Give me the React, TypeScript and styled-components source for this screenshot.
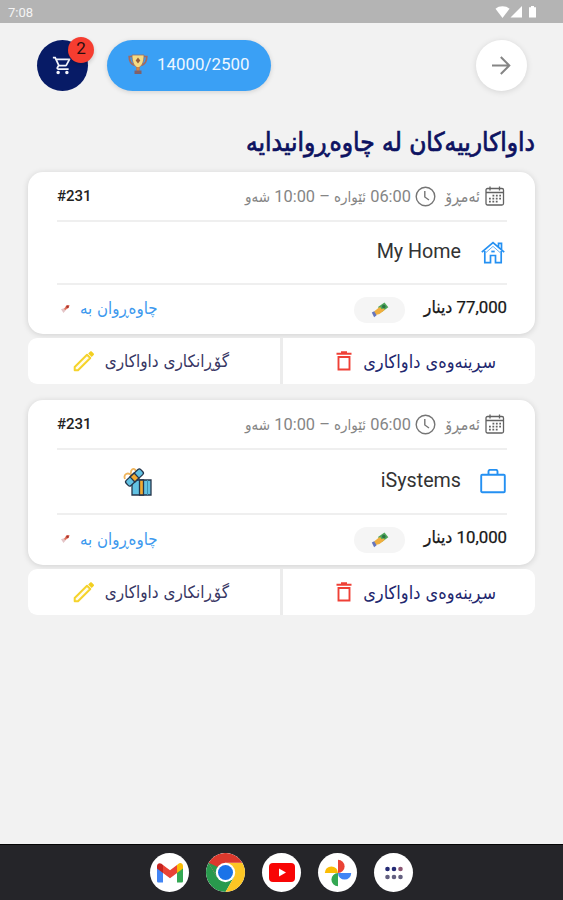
import React from "react";
import styled, { createGlobalStyle } from "styled-components";

const Global = createGlobalStyle`
  * { box-sizing: border-box; }
  body { margin: 0; background: #f2f2f2; font-family: Roboto, "DejaVu Sans", sans-serif; }
  svg { display: block; flex: none; }
`;

const Screen = styled.div`
  width: 563px;
  height: 900px;
  overflow: hidden;
  display: flex;
  flex-direction: column;
  background: #f2f2f2;
`;

const StatusBar = styled.div`
  height: 23px;
  flex: none;
  display: flex;
  align-items: center;
  justify-content: space-between;
  padding: 1px 25px 0 8px;
  background: #b4b4b4;
  color: #f4f4f4;
  font-size: 13px;
`;

const TopBar = styled.header`
  display: flex;
  align-items: center;
  height: 51px;
  margin: 17px 36px 0 37px;
`;

const CartButton = styled.div`
  position: relative;
  width: 51px;
  height: 51px;
  border-radius: 50%;
  background: #071b66;
  display: flex;
  align-items: center;
  justify-content: center;
`;

const Badge = styled.span`
  position: absolute;
  top: -3px;
  right: -6px;
  width: 26px;
  height: 26px;
  border-radius: 50%;
  background: #f63d30;
  color: #2a0d10;
  font-size: 17px;
  line-height: 22px;
  text-align: center;
  box-shadow: 0 2px 4px rgba(0, 0, 0, 0.18);
`;

const Points = styled.div`
  display: flex;
  align-items: center;
  gap: 9px;
  width: 164px;
  height: 51px;
  margin-left: 19px;
  padding: 0 0 4px 21px;
  border-radius: 26px;
  background: #3aa0f5;
  box-shadow: 0 1px 5px rgba(0, 0, 0, 0.14);
  color: #eef7ff;
  font-size: 16.9px;
`;

const NextButton = styled.div`
  width: 51px;
  height: 51px;
  margin-left: auto;
  border-radius: 50%;
  background: #fff;
  display: flex;
  align-items: center;
  justify-content: center;
  box-shadow: 0 1px 6px rgba(0, 0, 0, 0.12);
`;

const Title = styled.h1`
  direction: rtl;
  height: 36px;
  margin: 34px 28px 11px;
  color: #0d1261;
  font-family: "DejaVu Sans Condensed", "DejaVu Sans", sans-serif;
  font-stretch: condensed;
  font-size: 26px;
  font-weight: 400;
  -webkit-text-stroke: 0.7px #0d1261;
  line-height: 34px;
  white-space: nowrap;
`;

const Order = styled.section`
  direction: rtl;
  width: 507px;
  margin: 0 28px 16px;
`;

const Card = styled.div`
  padding: 0 28px 0 29px;
  border-radius: 15px;
  background: #fff;
  box-shadow: 0 1px 6px rgba(0, 0, 0, 0.14);
`;

const Row = styled.div<{ $h: number; $line?: boolean; $lift?: number }>`
  display: flex;
  align-items: center;
  height: ${(p) => p.$h}px;
  padding-bottom: ${(p) => p.$lift ?? 0}px;
  border-bottom: ${(p) => (p.$line ? "2px solid #efefef" : "0")};
  white-space: nowrap;
`;

const IconSlot = styled.span<{ $w: number; $gap?: number }>`
  width: ${(p) => p.$w}px;
  margin-inline-end: ${(p) => p.$gap ?? 0}px;
  display: flex;
  flex: none;
  justify-content: center;
`;

const Kurdish = styled.span<{ $size: number; $color?: string }>`
  font-family: "DejaVu Sans Condensed", "DejaVu Sans", sans-serif;
  font-stretch: condensed;
  font-size: ${(p) => p.$size}px;
  color: ${(p) => p.$color ?? "inherit"};
`;

const When = styled.span<{ $w: number }>`
  width: ${(p) => p.$w}px;
  flex: none;
  color: #858585;
  font-size: 16.4px;
`;

const OrderId = styled.span`
  margin-right: auto;
  direction: ltr;
  color: #222;
  font-size: 15px;
  font-weight: 500;
`;

const Place = styled.span`
  direction: ltr;
  margin-bottom: 3px;
  color: #333;
  font-size: 19.7px;
`;

const GiftSlot = styled.span`
  margin-inline-start: auto;
  margin-inline-end: 66px;
`;

const Price = styled.span`
  width: 102px;
  flex: none;
  margin-bottom: 3px;
  color: #161616;
  font-size: 16.8px;
  -webkit-text-stroke: 0.25px #161616;
`;

const MoneyPill = styled.span`
  width: 51px;
  height: 26px;
  display: flex;
  align-items: center;
  justify-content: center;
  margin-top: 3px;
  border-radius: 13px;
  background: #f5f5f5;
`;

const Waiting = styled.span`
  display: flex;
  align-items: center;
  gap: 9px;
  margin-inline-start: auto;
  margin-inline-end: 3px;
`;

const Actions = styled.div`
  display: grid;
  grid-template-columns: 252px 252px;
  gap: 3px;
  height: 46px;
  margin-top: 4px;
  border-radius: 9px;
  background: #ececec;
  overflow: hidden;
`;

const Action = styled.div<{ $start: number; $gap: number }>`
  display: flex;
  align-items: center;
  gap: ${(p) => p.$gap}px;
  padding-inline-start: ${(p) => p.$start}px;
  background: #fff;
  white-space: nowrap;
`;

const Dock = styled.nav`
  height: 56px;
  flex: none;
  margin-top: auto;
  display: flex;
  align-items: center;
  justify-content: center;
  gap: 17px;
  border-top: 1px solid #050505;
  background: #252529;
`;

const AppIcon = styled.span`
  width: 39px;
  height: 39px;
  border-radius: 50%;
  background: #fff;
  display: flex;
  align-items: center;
  justify-content: center;
  overflow: hidden;
`;

const StatusIcons = () => (
  <svg width="43" height="14" viewBox="0 0 43 14" fill="#fff">
    <path d="M.5 3.700C4 .4 11 .4 14.500 3.700L7.500 13Z" />
    <path d="M27 1V12.500H15.500Z" />
    <path d="M36 1h3v1.200h2V12.500h-7V2.200h2Z" />
  </svg>
);

const CartIcon = () => (
  <svg width="21" height="21" viewBox="0 0 24 24" fill="#f3f5fc">
    <path d="M15.550 13c.75 0 1.410-.41 1.750-1.030l3.580-6.490A1 1 0 0 0 20.010 4H5.210L4.270 2H1v2h2l3.600 7.590-1.350 2.440C4.520 15.370 5.480 17 7 17h12v-2H7l1.100-2h7.450zM6.160 6h12.150l-2.760 5H8.530L6.160 6zM7 18a2 2 0 1 0 0 4 2 2 0 0 0 0-4zm10 0a2 2 0 1 0 0 4 2 2 0 0 0 0-4z" />
  </svg>
);

const TrophyIcon = () => (
  <svg width="20" height="20" viewBox="0 0 20 20">
    <path d="M4 2.500H1.200c0 4 1.500 7.500 5.500 9M16 2.500h2.800c0 4-1.500 7.500-5.500 9" fill="none" stroke="#a4695f" strokeWidth="1.700" />
    <path d="M4 1h12c0 6-1.500 10.500-4.500 12v3h-3v-3C5.500 11.500 4 7 4 1Z" fill="#f6dc84" stroke="#94706a" strokeWidth=".8" />
    <path d="M8.700 13h2.600v4H8.700Z" fill="#d08445" />
    <path d="M6.500 16.500h7V20h-7Z" fill="#80616a" />
    <path d="m10 3.500 2.300 3-2.300 3-2.300-3Z" fill="#955d3a" />
  </svg>
);

const ArrowIcon = () => (
  <svg width="22" height="22" viewBox="0 0 22 22" fill="none" stroke="#858585" strokeWidth="2">
    <path d="M1 10.500h17M9.800 2 18.300 10.500l-8.500 8.500" />
  </svg>
);

const CalendarIcon = () => (
  <svg width="20" height="20" viewBox="0 0 20 20" fill="none" stroke="#626262">
    <rect x="1" y="2.500" width="17.500" height="16.500" rx="1.500" strokeWidth="1.300" />
    <path d="M1 6.500h17.500M5 .5v4M14.500.5v4" strokeWidth="1.300" />
    <path d="M7.500 9.700h8.500M4 12.700h12M4 15.700h9" strokeWidth="1.700" strokeDasharray="1.800 1.600" />
  </svg>
);

const ClockIcon = () => (
  <svg width="21" height="21" viewBox="0 0 21 21" fill="none" stroke="#757575" strokeWidth="1.400">
    <circle cx="10.500" cy="10.500" r="9.300" />
    <path d="M9.800 5v6l4.200 3" />
  </svg>
);

const HomeIcon = () => (
  <svg width="24" height="23" viewBox="0 0 24 23" fill="none" stroke="#2490f2" strokeWidth="1.700">
    <path d="M.8 11.200 12 1.600l11.200 9.600M17.500 5.700V2.300h3v6.500" />
    <path d="M3.800 10v11.700h5.700v-7.200h5V21.700h5.700V10" />
    <path d="M5 11.500 12 5.400l7 6.100" strokeWidth="1" opacity=".7" />
    <path d="M10.300 10.500h3.400" strokeWidth="1.800" />
  </svg>
);

const BriefcaseIcon = () => (
  <svg width="26" height="26" viewBox="0 0 26 26" fill="none" stroke="#2490f2" strokeWidth="1.900" strokeLinejoin="round">
    <rect x="1.200" y="5.700" width="23.600" height="17.500" rx="1" />
    <path d="M8.500 5.500V2.500c0-1 .6-1.600 1.600-1.600h5.800c1 0 1.600.6 1.600 1.600v3" />
  </svg>
);

const MoneyIcon = () => (
  <svg width="18" height="16" viewBox="0 0 18 16">
    <path d="m7 5 6.500-4.500 3.800 4.700-6.800 5Z" fill="#4fa65a" />
    <circle cx="12.800" cy="4.600" r="1.800" fill="#2b7445" />
    <path d="m3 9.500 5-4c1.500-1 3 .5 2 1.700l2.500-.7c1.300 0 1.500 1.200.6 2L8.500 12l-3.800 1Z" fill="#efae3d" />
    <path d="m.8 10.500 2.400-1.300 2.400 4-2.500 2Z" fill="#6575bd" />
  </svg>
);

const PinIcon = () => (
  <svg width="11" height="11" viewBox="0 0 11 11">
    <path d="M1 6.200 4.500 5l1.500 2-2.500 3Z" fill="#e4c4c6" />
    <path d="m4 6 2.500-3.700L9.500 2 8.800 4.800 5.300 7Z" fill="#e4725b" />
    <circle cx="7.500" cy="3.700" r="1.200" fill="#a6352f" />
  </svg>
);

const GiftIcon = () => (
  <svg width="30" height="30" viewBox="0 0 30 30" stroke="#25364c" strokeWidth="1.300">
    <path d="M2 12C0 7 5 5 8 8 7 2 11 0 13 4" fill="none" stroke="#efb45b" strokeWidth="1.800" />
    <path d="M9 13h19v15H9Z" fill="#62c2e3" />
    <path d="M16.500 13h4v15h-4Z" fill="#f2aa31" />
    <path d="M24.500 13v15" stroke="#3a91b4" strokeWidth="1" />
    <rect x="-10" y="-3.500" width="20" height="7" rx="2" transform="translate(11.500 10.500) rotate(-43)" fill="#62c2e3" />
    <rect x="-2.800" y="-3.500" width="5.600" height="7" transform="translate(11.500 10.500) rotate(-43)" fill="#f2aa31" />
  </svg>
);

const TrashIcon = () => (
  <svg width="16" height="20" viewBox="0 0 16 20" fill="none" stroke="#ef4036" strokeWidth="1.900">
    <path d="M.5 2.700h15M5 1.200h6M2.500 6h11v12.500h-11Z" />
  </svg>
);

const PencilIcon = () => (
  <svg width="22" height="22" viewBox="0 0 22 22">
    <path d="M1.700 17 14 4.700 17.300 8 5 20.300H1.700Z" fill="#fffceb" stroke="#f5d32c" strokeWidth="2" strokeLinejoin="round" />
    <path d="m15.200 3.500 2-2c.5-.5 1-.5 1.500 0l2 2c.5.5.5 1 0 1.500l-2 2Z" fill="#f2cf20" />
  </svg>
);

const GmailIcon = () => (
  <svg width="26" height="20" viewBox="0 0 26 20">
    <path d="M0 4v14c0 1 .8 1.600 1.600 1.600H6V8Z" fill="#4285f4" />
    <path d="M20 8v11.600h4.400c1 0 1.600-.7 1.600-1.600V4Z" fill="#34a853" />
    <path d="M20 2v8l6-4.500V3c0-2.700-2.800-3.700-4.500-2.300Z" fill="#fbbc04" />
    <path d="M6 10V2l7 5.300L20 2v8l-7 5.200Z" fill="#ea4335" />
    <path d="M0 3v2.500L6 10V2L4.500.8C2.700-.6 0 .5 0 3Z" fill="#c5221f" />
  </svg>
);

const ChromeIcon = () => (
  <svg width="39" height="39" viewBox="0 0 39 39">
    <path d="M2.600 9.750A19.500 19.500 0 0 0 19.500 39L27.900 24.300 19.500 19.500 11.100 24.300Z" fill="#299a4d" />
    <path d="M36.400 9.750A19.500 19.500 0 0 1 19.500 39L27.900 24.300 19.500 9.750Z" fill="#fdc624" />
    <path d="M19.500 9.750h16.900A19.500 19.500 0 0 0 2.600 9.750l8.500 14.500Z" fill="#dc392d" />
    <path d="M2.600 9.750 11.100 24.300 14 15Z" fill="#299a4d" />
    <circle cx="19.500" cy="19.500" r="9.700" fill="#fff" />
    <circle cx="19.500" cy="19.500" r="7.500" fill="#1a73e8" />
  </svg>
);

const YoutubeIcon = () => (
  <svg width="26" height="19" viewBox="0 0 26 19">
    <rect width="26" height="19" rx="4" fill="#f80505" />
    <path d="m10 5.500 7 4-7 4Z" fill="#fff" />
  </svg>
);

const PhotosIcon = () => (
  <svg width="28" height="28" viewBox="0 0 28 28">
    <path d="M14 14V.8a6.600 6.600 0 0 1 0 13.200Z" fill="#ea4335" />
    <path d="M14 14h13.200a6.600 6.600 0 0 1-13.200 0Z" fill="#4285f4" />
    <path d="M14 14v13.200a6.600 6.600 0 0 1 0-13.200Z" fill="#34a853" />
    <path d="M14 14H.8a6.600 6.600 0 0 1 13.200 0Z" fill="#fbbc04" />
  </svg>
);

const AppsIcon = () => (
  <svg width="20" height="14" viewBox="0 0 20 14">
    <g fill="#252b75"><circle cx="3.500" cy="3" r="2.300" /><circle cx="10" cy="3" r="2.300" /></g>
    <circle cx="16.500" cy="3" r="2.300" fill="#8b5673" />
    <g fill="#636080"><circle cx="3.500" cy="11" r="2.300" /><circle cx="10" cy="11" r="2.300" /><circle cx="16.500" cy="11" r="2.300" /></g>
  </svg>
);

interface OrderData {
  id: string;
  place: string;
  icon: React.ReactNode;
  gift: boolean;
  price: string;
  heights: [number, number, number];
}

const orders: OrderData[] = [
  { id: "#231", place: "My Home", icon: <HomeIcon />, gift: false, price: "77,000", heights: [50, 63, 49] },
  { id: "#231", place: "iSystems", icon: <BriefcaseIcon />, gift: true, price: "10,000", heights: [50, 65, 50] },
];

const OrderItem = ({ order }: { order: OrderData }) => (
  <Order>
    <Card>
      <Row $h={order.heights[0]} $line>
        <IconSlot $w={24} $gap={3}><CalendarIcon /></IconSlot>
        <When $w={44}><Kurdish $size={15.8}>ئەمڕۆ</Kurdish></When>
        <IconSlot $w={21} $gap={4}><ClockIcon /></IconSlot>
        <When $w={170}>
          06:00 <Kurdish $size={15}>ئێوارە</Kurdish> – 10:00 <Kurdish $size={15}>شەو</Kurdish>
        </When>
        <OrderId>{order.id}</OrderId>
      </Row>
      <Row $h={order.heights[1]} $line>
        <IconSlot $w={28} $gap={18}>{order.icon}</IconSlot>
        <Place>{order.place}</Place>
        {order.gift && <GiftSlot><GiftIcon /></GiftSlot>}
      </Row>
      <Row $h={order.heights[2]} $lift={3}>
        <Price>{order.price} <Kurdish $size={17.5}>دینار</Kurdish></Price>
        <MoneyPill><MoneyIcon /></MoneyPill>
        <Waiting>
          <Kurdish $size={16.7} $color="#3d99ee">چاوەڕوان بە</Kurdish>
          <PinIcon />
        </Waiting>
      </Row>
    </Card>
    <Actions>
      <Action $start={39} $gap={11}>
        <Kurdish $size={18} $color="#22276e">سڕینەوەی داواکاری</Kurdish>
        <TrashIcon />
      </Action>
      <Action $start={51} $gap={10}>
        <Kurdish $size={17} $color="#373663">گۆڕانکاری داواکاری</Kurdish>
        <PencilIcon />
      </Action>
    </Actions>
  </Order>
);

export default function App() {
  return (
    <>
      <Global />
      <Screen>
        <StatusBar>7:08<StatusIcons /></StatusBar>
        <TopBar>
          <CartButton><CartIcon /><Badge>2</Badge></CartButton>
          <Points><TrophyIcon />14000/2500</Points>
          <NextButton><ArrowIcon /></NextButton>
        </TopBar>
        <Title>داواکارییەکان لە چاوەڕوانیدایە</Title>
        {orders.map((order) => <OrderItem key={order.place} order={order} />)}
        <Dock>
          <AppIcon><GmailIcon /></AppIcon>
          <AppIcon><ChromeIcon /></AppIcon>
          <AppIcon><YoutubeIcon /></AppIcon>
          <AppIcon><PhotosIcon /></AppIcon>
          <AppIcon><AppsIcon /></AppIcon>
        </Dock>
      </Screen>
    </>
  );
}
